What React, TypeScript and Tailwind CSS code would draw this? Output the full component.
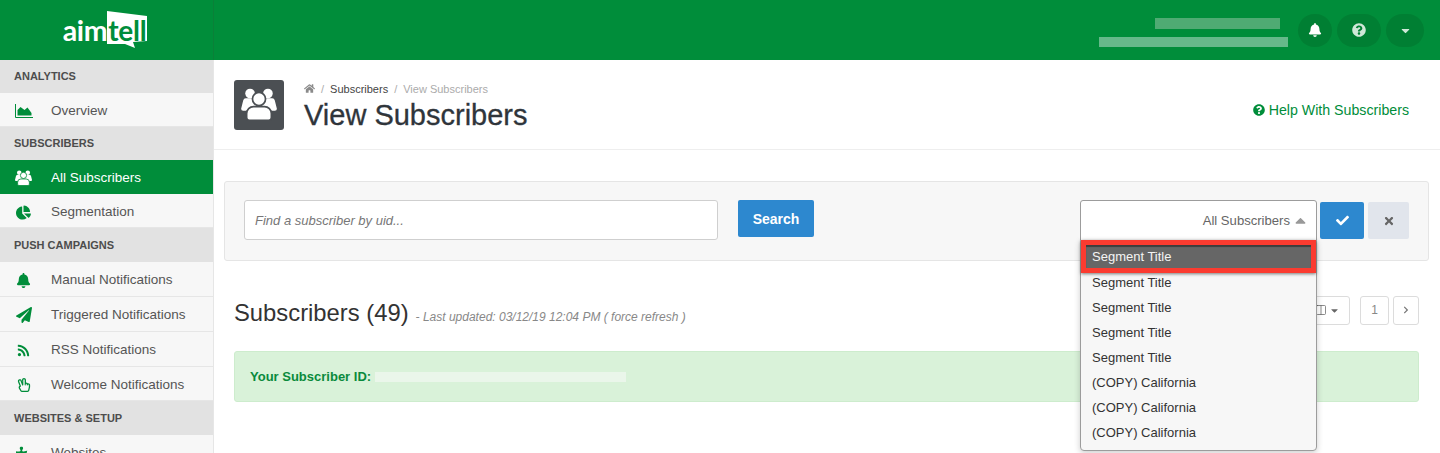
import {
  FaBell,
  FaCaretDown,
  FaCaretUp,
  FaChartPie,
  FaCheck,
  FaChevronRight,
  FaHome,
  FaPaperPlane,
  FaPuzzlePiece,
  FaQuestionCircle,
  FaRegHandPeace,
  FaRss,
  FaTimes,
} from "react-icons/fa";
import { Columns2 } from "lucide-react";
import type { ReactNode } from "react";

function UsersGlyph({ className }: { className: string }) {
  return (
    <svg viewBox="0 0 52 48" className={className}>
      <circle cx="13" cy="8" r="7" stroke="none" />
      <circle cx="39" cy="8" r="7" stroke="none" />
      <path d="M3 18 a4 4 0 0 1 4-3 h38 a4 4 0 0 1 4 3 l3 12 a3 3 0 0 1 -3 3 H3 a3 3 0 0 1 -3-3 Z" stroke="none" />
      <circle cx="26" cy="16" r="9.5" strokeWidth="2.5" />
      <path d="M8 37 a10 10 0 0 1 10-10 h16 a10 10 0 0 1 10 10 v6 a4 4 0 0 1 -4 4 H12 a4 4 0 0 1 -4-4 Z" strokeWidth="2.5" />
    </svg>
  );
}

function AreaGlyph() {
  return (
    <svg viewBox="0 0 18 14" className="h-[14px] w-[18px]">
      <path d="M0.5 0 V13.5 H18" fill="none" stroke="currentColor" />
      <path d="M2.5 11.5 V6 L5.5 3 L9.5 6 L12.5 3.5 L16.5 9 V11.5 Z" fill="currentColor" />
    </svg>
  );
}

function SectionLabel({ children, tall }: { children: ReactNode; tall?: boolean }) {
  return (
    <div className={tall ? "flex h-[34px] items-center bg-[#e2e2e2] pl-[14px] text-[11px] font-bold text-[#4d4d4d]" : "flex h-[33px] items-center bg-[#e2e2e2] pl-[14px] text-[11px] font-bold text-[#4d4d4d]"}>
      {children}
    </div>
  );
}

function NavItem({ icon, label, active, short }: { icon: ReactNode; label: string; active?: boolean; short?: boolean }) {
  if (active) {
    return (
      <div className="flex h-[34px] items-center bg-[#008d3a] pt-[2px] text-[13.5px] text-white">
        <span className="flex w-[51px] justify-center pr-[4px] text-white">{icon}</span>
        {label}
      </div>
    );
  }
  return (
    <div className={short ? "flex h-[34px] items-center border-b border-[#e6e6e6] bg-[#f7f7f7] pt-[3px] text-[13.5px] text-[#555]" : "flex h-[35px] items-center border-b border-[#e6e6e6] bg-[#f7f7f7] pt-[2px] text-[13.5px] text-[#555]"}>
      <span className="flex w-[51px] justify-center pr-[4px] text-[#008d3a]">{icon}</span>
      {label}
    </div>
  );
}

function Logo() {
  return (
    <div className="flex items-center pr-[3px] font-['Lato',sans-serif]">
      <span className="text-[28.5px] font-bold leading-none tracking-[-0.3px] text-white">aim</span>
      <span className="relative flex h-[30px] w-[40px] items-center justify-center">
        <svg viewBox="0 0 40 37" className="absolute left-0 top-[-4px] h-[37px] w-[40px]">
          <path d="M0 0 L40 5 L40 30 L26 31 L28 37 L18 33 L0 33 Z" fill="#fff" />
        </svg>
        <span className="relative text-[28px] font-bold leading-none tracking-[-0.3px] text-[#008d3a]">tell</span>
      </span>
    </div>
  );
}

const options = ["Segment Title", "Segment Title", "Segment Title", "Segment Title", "(COPY) California", "(COPY) California", "(COPY) California"];

export default function App() {
  return (
    <div className="flex h-[453px] w-[1440px] flex-col overflow-hidden bg-white font-['Liberation_Sans',Arial,sans-serif]">
      <header className="flex h-[60px] shrink-0 bg-[#008d3a]">
        <div className="flex w-[214px] items-center justify-center border-r border-[#0a8038]">
          <Logo />
        </div>
        <div className="flex flex-1 items-center justify-end pr-4">
          <div className="mr-[10px] mt-[4px] flex flex-col items-end gap-[8px] pr-[8px]">
            <div className="h-[11px] w-[125px] bg-[#4fab73]" />
            <div className="mr-[-8px] h-[10px] w-[189px] bg-[#66b98a]" />
          </div>
          <div className="flex gap-[5px] text-white">
            <button className="flex h-[33px] w-[34px] items-center justify-center rounded-full bg-[#007f33] text-[14px]">
              <FaBell />
            </button>
            <button className="flex h-[33px] w-[44px] items-center justify-center rounded-full bg-[#007f33] text-[14px] text-[#cfe8d8]">
              <FaQuestionCircle />
            </button>
            <button className="flex h-[33px] w-[38px] items-center justify-center rounded-full bg-[#007f33] text-[13px] text-[#cfe8d8]">
              <FaCaretDown />
            </button>
          </div>
        </div>
      </header>

      <div className="flex min-h-0 flex-1">
        <aside className="w-[214px] shrink-0 overflow-hidden border-r border-[#e6e6e6]">
          <SectionLabel>ANALYTICS</SectionLabel>
          <NavItem short icon={<AreaGlyph />} label="Overview" />
          <SectionLabel>SUBSCRIBERS</SectionLabel>
          <NavItem active icon={<UsersGlyph className="h-[16px] w-[17px] fill-white stroke-[#008d3a]" />} label="All Subscribers" />
          <NavItem short icon={<FaChartPie className="text-[15px]" />} label="Segmentation" />
          <SectionLabel tall>PUSH CAMPAIGNS</SectionLabel>
          <NavItem icon={<FaBell className="text-[15px]" />} label="Manual Notifications" />
          <NavItem icon={<FaPaperPlane className="text-[16px]" />} label="Triggered Notifications" />
          <NavItem icon={<FaRss className="text-[13px]" />} label="RSS Notifications" />
          <NavItem short icon={<FaRegHandPeace className="text-[14px]" />} label="Welcome Notifications" />
          <SectionLabel tall>WEBSITES &amp; SETUP</SectionLabel>
          <NavItem icon={<FaPuzzlePiece className="text-[15px]" />} label="Websites" />
        </aside>

        <main className="min-w-0 flex-1">
          <div className="flex h-[90px] items-center border-b border-[#eeeeee] pl-[20px] pr-[31px]">
            <div className="flex h-[50px] w-[50px] items-center justify-center rounded-[3px] bg-[#4b4f53]">
              <UsersGlyph className="h-[33px] w-[36px] fill-white stroke-[#4b4f53]" />
            </div>
            <div className="ml-[20px] pt-[4px]">
              <div className="flex items-center gap-[6px] text-[11px] leading-[14px] text-[#ababab]">
                <FaHome className="text-[11px] text-[#8a8a8a]" />
                <span>/</span>
                <span className="text-[#444]">Subscribers</span>
                <span>/</span>
                <span>View Subscribers</span>
              </div>
              <h1 className="mt-[3px] text-[29px] font-normal leading-[33px] text-[#2f353b] [-webkit-text-stroke:0.3px_#2f353b]">
                View Subscribers
              </h1>
            </div>
            <a className="ml-auto mt-[12px] flex items-center gap-[4px] text-[14.2px] text-[#008d3a]">
              <FaQuestionCircle className="text-[12px]" />
              Help With Subscribers
            </a>
          </div>

          <div className="pl-[10px] pr-[11px] pt-[31px]">
            <div className="flex h-[80px] items-start rounded-[3px] border border-[#e5e5e5] bg-[#f7f7f7] pl-[19px] pr-[19px] pt-[18px]">
              <input
                placeholder="Find a subscriber by uid..."
                className="h-[40px] w-[474px] rounded-[3px] border border-[#cfcfcf] bg-white px-[10px] text-[13px] italic text-[#555] placeholder:text-[#777] focus:outline-none"
              />
              <button className="ml-[20px] h-[37px] w-[76px] rounded-[2px] bg-[#2d88cf] pt-[1px] text-[14px] font-bold text-white">
                Search
              </button>
              <div className="relative ml-auto">
                <div className="flex h-[41px] w-[237px] items-center justify-end gap-[2px] rounded-t-[3px] border border-[#9c9c9c] bg-white pr-[7px] text-[13.1px] text-[#666]">
                  All Subscribers
                  <FaCaretUp className="text-[17px] text-[#999]" />
                </div>
                <div className="absolute left-0 top-[40px] z-10 h-[211px] w-[237px] rounded-b-[4px] border border-[#9c9c9c] bg-[#f7f7f7] text-[13px] text-[#333] shadow-[0_2px_6px_rgba(0,0,0,0.2)]">
                  <div className="relative z-10 mb-[-3px] mt-[-1px] flex h-[33px] items-center border-[5px] border-[#fb3b30] bg-[#666666] pl-[6px] pt-[1px] text-[#f4f4f4] shadow-[0_1px_3px_rgba(0,0,0,0.5),inset_0_2px_1px_rgba(0,0,0,0.4)]">
                    Segment Title
                  </div>
                  {options.map((option, i) => (
                    <div key={i} className="flex h-[25px] items-center pl-[11px]">
                      {option}
                    </div>
                  ))}
                </div>
              </div>
              <button className="ml-[3px] mt-[2px] flex h-[37px] w-[44px] items-center justify-center rounded-[2px] bg-[#2d88cf] text-[13px] text-white">
                <FaCheck />
              </button>
              <button className="ml-[4px] mt-[2px] flex h-[37px] w-[41px] items-center justify-center rounded-[2px] bg-[#e1e5ec] text-[12px] text-[#666]">
                <FaTimes />
              </button>
            </div>

            <div className="mt-[34px] flex h-[30px] items-center pl-[10px] pr-[10px]">
              <h2 className="mt-[6px] text-[23.8px] font-normal leading-none text-[#333]">Subscribers (49)</h2>
              <span className="ml-[7px] mt-[13px] text-[12px] italic text-[#888]">
                - Last updated: 03/12/19 12:04 PM ( force refresh )
              </span>
              <div className="ml-auto flex items-center">
                <button className="flex h-[29px] w-[60px] items-center justify-end gap-[2px] rounded-[3px] border border-[#dcdcdc] pr-[9px] text-[11px] text-[#666]">
                  <Columns2 size={12} strokeWidth={1.5} />
                  <FaCaretDown />
                </button>
                <button className="ml-[10px] h-[29px] w-[29px] rounded-[3px] border border-[#dcdcdc] text-[12px] text-[#888]">1</button>
                <button className="ml-[4px] flex h-[29px] w-[26px] items-center justify-center rounded-[3px] border border-[#dcdcdc] text-[8px] text-[#777]">
                  <FaChevronRight />
                </button>
              </div>
            </div>

            <div className="ml-[10px] mr-[10px] mt-[26px] flex h-[51px] items-center rounded-[3px] border border-[#cdeccd] bg-[#d9f2d9] pl-[15px] text-[13px] font-bold text-[#0a8a3c]">
              Your Subscriber ID:
              <span className="ml-[4px] h-[10px] w-[251px] bg-[#eaf6ea]" />
            </div>
          </div>
        </main>
      </div>
    </div>
  );
}
